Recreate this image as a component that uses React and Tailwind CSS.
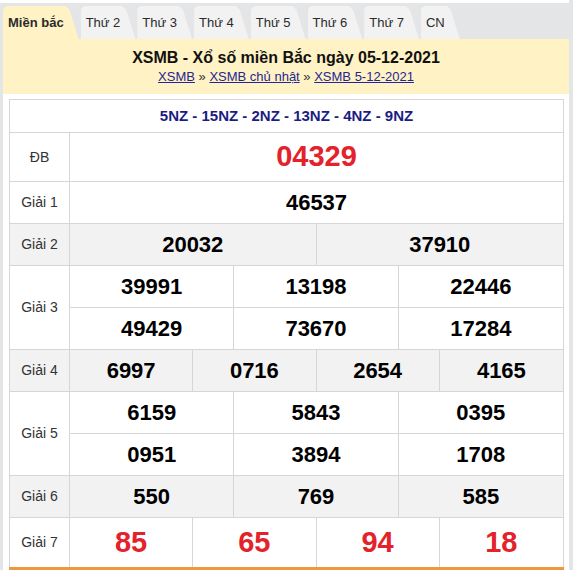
const tabs = ["Miền bắc", "Thứ 2", "Thứ 3", "Thứ 4", "Thứ 5", "Thứ 6", "Thứ 7", "CN"];

const Cell = ({ children, red }) => (
    <div className={"flex items-center justify-center font-bold " + (red ? "text-[29px] text-[#e3222b]" : "text-[22px] text-black")}>
        {children}
    </div>
);

const Numbers = ({ nums, cols, red }) => {
    const grid = cols === 2 ? "grid-cols-2" : cols === 3 ? "grid-cols-3" : cols === 4 ? "grid-cols-4" : "grid-cols-1";
    return (
        <div className={"grid h-full divide-x divide-[#d6d6d6] " + grid}>
            {nums.map((n, i) => (
                <Cell key={i} red={red}>{n}</Cell>
            ))}
        </div>
    );
};

const Row = ({ label, gray, h, last, children }) => (
    <div className={"flex " + h + " " + (gray ? "bg-[#f2f2f2] " : "bg-white ") + (last ? "" : "border-b border-[#d6d6d6]")}>
        <div className="w-[60px] shrink-0 border-r border-[#d6d6d6] flex items-center justify-center text-[14px] text-[#333]">
            {label}
        </div>
        <div className="flex-1 min-w-0">{children}</div>
    </div>
);

const TwoRows = ({ top, bottom }) => (
    <div className="flex flex-col h-full">
        <div className="h-[42px] border-b border-[#d6d6d6]">
            <Numbers nums={top} cols={3} />
        </div>
        <div className="flex-1">
            <Numbers nums={bottom} cols={3} />
        </div>
    </div>
);

const App = () => {
    return (
        <div className="w-[573px] h-[570px] overflow-hidden bg-[#e4e5e7] font-['Liberation_Sans',Arial,sans-serif]">
            <div className="h-[3px] w-[569px] bg-white" />
            <div className="ml-[3px] w-[566px]">
                {/* tabs */}
                <div className="flex gap-[2px] pt-[3px] h-[36px]">
                    {tabs.map((t, i) => (
                        <div
                            key={t}
                            className={
                                "h-[33px] pl-[5px] pr-[15px] flex items-center text-[13px] text-[#2b2b2b] rounded-tl-[5px] [clip-path:polygon(0_0,calc(100%-13px)_0,calc(100%-9px)_4px,100%_100%,0_100%)] " +
                                (i === 0 ? "bg-[#fff2c4] font-bold" : "bg-[#f2f2f2]")
                            }
                        >
                            {t}
                        </div>
                    ))}
                </div>

                {/* header */}
                <div className="bg-[#fff2c4] pt-[9px] pb-[8px] text-center">
                    <h1 className="text-[16px] leading-[20px] font-bold text-[#111]">XSMB - Xổ số miền Bắc ngày 05-12-2021</h1>
                    <div className="text-[13px] leading-[18px] text-[#333]">
                        <a href="#" className="underline text-[#262693]">XSMB</a>
                        {" » "}
                        <a href="#" className="underline text-[#262693]">XSMB chủ nhật</a>
                        {" » "}
                        <a href="#" className="underline text-[#262693]">XSMB 5-12-2021</a>
                    </div>
                </div>

                {/* results */}
                <div className="bg-white pl-[6px] pr-[5px] pt-[5px] h-[500px]">
                    <div className="border-t border-x border-[#d6d6d6]">
                        <div className="h-[33px] border-b border-[#d6d6d6] flex items-center justify-center text-[15px] font-bold text-[#1b1d82]">
                            5NZ - 15NZ - 2NZ - 13NZ - 4NZ - 9NZ
                        </div>
                        <Row label="ĐB" h="h-[49px]">
                            <Numbers nums={["04329"]} cols={1} red />
                        </Row>
                        <Row label="Giải 1" h="h-[42px]">
                            <Numbers nums={["46537"]} cols={1} />
                        </Row>
                        <Row label="Giải 2" h="h-[42px]" gray>
                            <Numbers nums={["20032", "37910"]} cols={2} />
                        </Row>
                        <Row label="Giải 3" h="h-[84px]">
                            <TwoRows top={["39991", "13198", "22446"]} bottom={["49429", "73670", "17284"]} />
                        </Row>
                        <Row label="Giải 4" h="h-[42px]" gray>
                            <Numbers nums={["6997", "0716", "2654", "4165"]} cols={4} />
                        </Row>
                        <Row label="Giải 5" h="h-[84px]">
                            <TwoRows top={["6159", "5843", "0395"]} bottom={["0951", "3894", "1708"]} />
                        </Row>
                        <Row label="Giải 6" h="h-[42px]" gray>
                            <Numbers nums={["550", "769", "585"]} cols={3} />
                        </Row>
                        <Row label="Giải 7" h="h-[49px]" last>
                            <Numbers nums={["85", "65", "94", "18"]} cols={4} red />
                        </Row>
                    </div>
                    <div className="h-[6px] bg-[#f0963c]" />
                </div>
            </div>
        </div>
    );
};

export default App;
